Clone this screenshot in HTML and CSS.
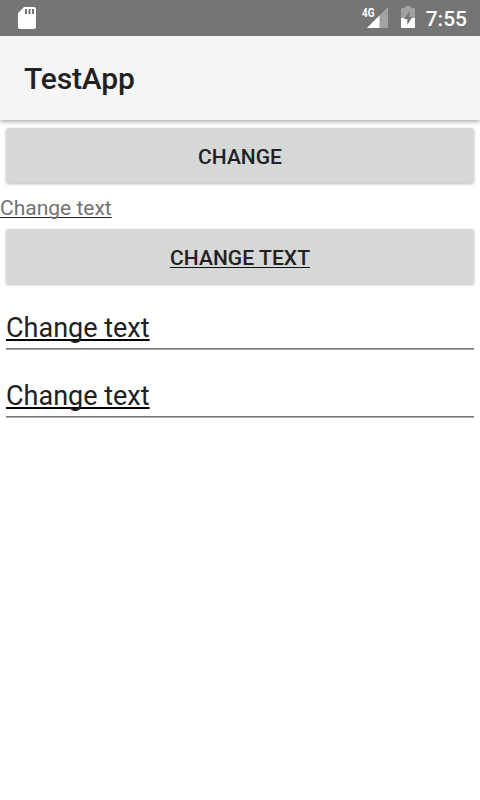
FILE: index.html
```html
<!DOCTYPE html>
<html lang="en">
<head>
<meta charset="utf-8">
<title>TestApp</title>
<link rel="stylesheet" href="styles.css">
</head>
<body>
<div class="status">
  <svg class="sd" width="18" height="22" viewBox="0 0 18 22"><path fill="#fff" fill-rule="evenodd" d="M6 0H16Q18 0 18 2V20Q18 22 16 22H2Q0 22 0 20V6ZM7 2V7H9V2ZM10.5 2V7H12.5V2ZM14 2V7H16V2Z"/></svg>
  <div class="signal">
    <span class="network">4G</span>
    <svg width="21" height="21" viewBox="0 0 21 21"><path fill="#a3a3a3" d="M21 0V21H0Z"/><path fill="#fff" d="M12.5 8.5V21H0Z"/></svg>
  </div>
  <svg class="battery" width="14" height="22" viewBox="0 0 14 22"><path fill="#a0a0a0" d="M4 0H10V2H13Q14 2 14 3V12H0V3Q0 2 1 2H4Z"/><path fill="#fff" d="M0 12H14V21Q14 22 13 22H1Q0 22 0 21Z"/><path fill="#757575" d="M9.2 5L3 13H6.3V19L11.3 11H8.2Z"/></svg>
  <span class="clock">7:55</span>
</div>
<header class="toolbar"><h1>TestApp</h1></header>
<main>
  <button class="btn" type="button"><span class="label">CHANGE</span></button>
  <p class="note"><span class="underlined">Change text</span></p>
  <button class="btn" type="button"><span class="label underlined wide">CHANGE TEXT</span></button>
  <div class="field first"><span class="underlined">Change text</span></div>
  <div class="field"><span class="underlined">Change text</span></div>
</main>
</body>
</html>
```
FILE: styles.css
```css
* { box-sizing: border-box; }
body { margin: 0; background: #fff; color: #212121; font-family: Roboto, "Liberation Sans", sans-serif; height: 800px; overflow: hidden; }
.status { height: 36px; background: #757575; display: flex; align-items: flex-start; padding: 7px 13px 0 18px; color: #fff; position: relative; z-index: 1; }
.sd { margin-right: auto; }
.signal { display: flex; position: relative; width: 26px; justify-content: flex-end; margin-right: 13px; }
.network { position: absolute; left: 0; top: 0; font-size: 12.5px; line-height: 11px; font-weight: 700; transform: scaleX(.8); transform-origin: left; }
.battery { margin: -1px 11px 0 0; }
.clock { font-size: 21px; line-height: 24px; font-weight: 500; }
.toolbar { height: 84px; background: #f5f5f5; display: flex; align-items: center; padding: 2px 24px 0; box-shadow: 0 1px 5px rgba(0,0,0,.42); position: relative; }
h1 { margin: 0; font-size: 30px; line-height: 36px; font-weight: 500; letter-spacing: -.15px; }
main { padding-top: 8px; }
.btn { display: flex; align-items: center; justify-content: center; width: 468px; height: 55px; margin: 0 6px; padding: 3px 0 0; border: 0; border-radius: 3px; background: #d6d7d7; box-shadow: 0 1px 3px rgba(0,0,0,.28); color: #212121; font: 500 21px/24px Roboto, "Liberation Sans", sans-serif; }
.underlined { text-decoration: underline #111 1px; text-decoration-skip-ink: none; text-underline-offset: 2px; }
.wide { letter-spacing: .08px; }
.note { margin: 12px 0 9px; height: 25px; padding-top: 1px; font-size: 21px; line-height: 25px; color: #737373; }
.note .underlined { text-decoration-color: #222; }
.field { margin: 0 6px; height: 68px; padding-top: 30px; font-size: 27px; line-height: 32px; background: linear-gradient(#777 1px, #aaa 1px) bottom / 100% 2px no-repeat; }
.field.first { height: 66px; padding-top: 28px; }
.field .underlined { text-decoration: underline #000 2px; text-underline-offset: 2px; }
```
